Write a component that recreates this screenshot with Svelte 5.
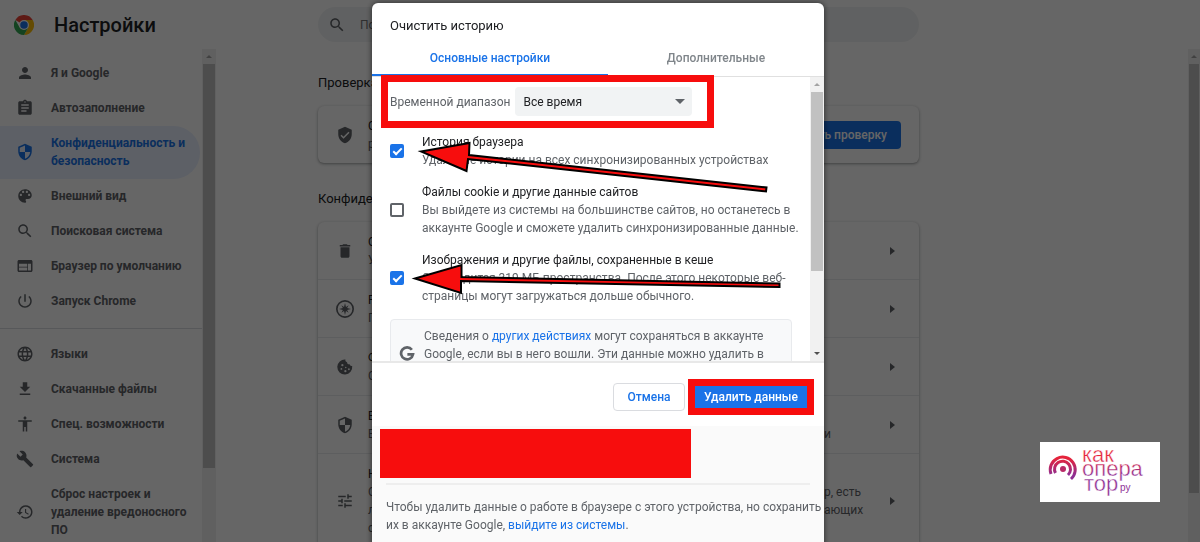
<script>
  const primaryNav = [
    { icon: 'person', label: 'Я и Google' },
    { icon: 'clipboard', label: 'Автозаполнение' },
    { icon: 'shield', label: 'Конфиденциальность и безопасность', active: true },
    { icon: 'palette', label: 'Внешний вид' },
    { icon: 'search', label: 'Поисковая система' },
    { icon: 'browser', label: 'Браузер по умолчанию' },
    { icon: 'power', label: 'Запуск Chrome' },
  ];

  const secondaryNav = [
    { icon: 'globe', label: 'Языки' },
    { icon: 'download', label: 'Скачанные файлы' },
    { icon: 'accessibility', label: 'Спец. возможности' },
    { icon: 'wrench', label: 'Система' },
    { icon: 'restore', label: 'Сброс настроек и удаление вредоносного ПО' },
  ];

  const rows = [
    { icon: 'trash', title: 'О', lines: ['У'] },
    { icon: 'compass', title: 'Р', lines: ['П'] },
    { icon: 'cookie', title: 'Ф', lines: ['С'] },
    { icon: 'shield', title: 'Б', lines: ['Б'], ends: ['и'] },
    { icon: 'tune', title: 'Н', lines: ['О', 'л', 'с'], ends: ['р, есть', 'ающих', ''] },
  ];

  let options = $state([
    { id: 'history', checked: true, title: 'История браузера', text: 'Удаление истории на всех синхронизированных устройствах' },
    { id: 'cookies', checked: false, title: 'Файлы cookie и другие данные сайтов', text: 'Вы выйдете из системы на большинстве сайтов, но останетесь в аккаунте Google и сможете удалить синхронизированные данные.' },
    { id: 'cache', checked: true, title: 'Изображения и другие файлы, сохраненные в кеше', text: 'Освободится 319 МБ пространства. После этого некоторые веб-страницы могут загружаться дольше обычного.' },
  ]);

  const icons = {
    person: 'M12 12c2.21 0 4-1.79 4-4s-1.79-4-4-4-4 1.79-4 4 1.79 4 4 4zm0 2c-2.67 0-8 1.34-8 4v2h16v-2c0-2.66-5.33-4-8-4z',
    clipboard: 'M19 3h-4.18C14.4 1.84 13.3 1 12 1s-2.4.84-2.82 2H5c-1.1 0-2 .9-2 2v14c0 1.1.9 2 2 2h14c1.1 0 2-.9 2-2V5c0-1.1-.9-2-2-2zm-7 0c.55 0 1 .45 1 1s-.45 1-1 1-1-.45-1-1 .45-1 1-1zm2 14H7v-2h7v2zm3-4H7v-2h10v2zm0-4H7V7h10v2z',
    shield: 'M12 1L3 5v6c0 5.55 3.84 10.74 9 12 5.16-1.26 9-6.45 9-12V5l-9-4zm0 10.99h7c-.53 4.12-3.28 7.79-7 8.94V12H5V6.3l7-3.11v8.8z',
    palette: 'M12 3c-4.97 0-9 4.03-9 9s4.03 9 9 9c.83 0 1.5-.67 1.5-1.5 0-.39-.15-.74-.39-1.01-.23-.26-.38-.61-.38-.99 0-.83.67-1.5 1.5-1.5H16c2.76 0 5-2.24 5-5 0-4.42-4.03-8-9-8zm-5.5 9c-.83 0-1.5-.67-1.5-1.5S5.67 9 6.5 9 8 9.67 8 10.5 7.33 12 6.5 12zm3-4C8.67 8 8 7.33 8 6.5S8.67 5 9.5 5s1.5.67 1.5 1.5S10.33 8 9.5 8zm5 0c-.83 0-1.5-.67-1.5-1.5S13.67 5 14.5 5s1.5.67 1.5 1.5S15.33 8 14.5 8zm3 4c-.83 0-1.5-.67-1.5-1.5S16.67 9 17.5 9s1.5.67 1.5 1.5-.67 1.5-1.5 1.5z',
    search: 'M15.5 14h-.79l-.28-.27C15.41 12.59 16 11.11 16 9.5 16 5.91 13.09 3 9.5 3S3 5.91 3 9.5 5.91 16 9.5 16c1.61 0 3.09-.59 4.23-1.57l.27.28v.79l5 4.99L20.49 19l-4.99-5zm-6 0C7.01 14 5 11.99 5 9.5S7.01 5 9.5 5 14 7.01 14 9.5 11.99 14 9.5 14z',
    browser: 'M20 4H4c-1.1 0-1.99.9-1.99 2L2 18c0 1.1.9 2 2 2h16c1.1 0 2-.9 2-2V6c0-1.1-.9-2-2-2zm-5 14H4v-4h11v4zm0-5H4V9h11v4zm5 5h-4V9h4v9z',
    power: 'M13 3h-2v10h2V3zm4.83 2.17l-1.42 1.42C17.99 7.86 19 9.81 19 12c0 3.87-3.13 7-7 7s-7-3.13-7-7c0-2.19 1.01-4.14 2.58-5.42L6.17 5.17C4.23 6.82 3 9.26 3 12c0 4.97 4.03 9 9 9s9-4.03 9-9c0-2.74-1.23-5.18-3.17-6.83z',
    globe: 'M12 2C6.48 2 2 6.48 2 12s4.48 10 10 10 10-4.48 10-10S17.52 2 12 2zm6.93 6h-2.95c-.32-1.25-.78-2.45-1.38-3.56 1.84.63 3.37 1.91 4.33 3.56zM12 4.04c.83 1.2 1.48 2.53 1.91 3.96h-3.82c.43-1.43 1.08-2.76 1.91-3.96zM4.26 14C4.1 13.36 4 12.69 4 12s.1-1.36.26-2h3.38c-.08.66-.14 1.32-.14 2s.06 1.34.14 2H4.26zm.82 2h2.95c.32 1.25.78 2.45 1.38 3.56-1.84-.63-3.37-1.9-4.33-3.56zm2.95-8H5.08c.96-1.66 2.49-2.93 4.33-3.56C8.81 5.55 8.35 6.75 8.03 8zM12 19.96c-.83-1.2-1.48-2.53-1.91-3.96h3.82c-.43 1.43-1.08 2.76-1.91 3.96zM14.34 14H9.66c-.09-.66-.16-1.32-.16-2s.07-1.35.16-2h4.68c.09.65.16 1.32.16 2s-.07 1.34-.16 2zm.25 5.56c.6-1.11 1.06-2.31 1.38-3.56h2.95c-.96 1.65-2.49 2.93-4.33 3.56zM16.36 14c.08-.66.14-1.32.14-2s-.06-1.34-.14-2h3.38c.16.64.26 1.31.26 2s-.1 1.36-.26 2h-3.38z',
    download: 'M19 9h-4V3H9v6H5l7 7 7-7zM5 18v2h14v-2H5z',
    accessibility: 'M12 2c1.1 0 2 .9 2 2s-.9 2-2 2-2-.9-2-2 .9-2 2-2zm9 7h-6v13h-2v-6h-2v6H9V9H3V7h18v2z',
    wrench: 'M22.7 19l-9.1-9.1c.9-2.3.4-5-1.5-6.9-2-2-5-2.4-7.4-1.3L9 6 6 9 1.6 4.7C.4 7.1.9 10.1 2.9 12.1c1.9 1.9 4.6 2.4 6.9 1.5l9.1 9.1c.4.4 1 .4 1.4 0l2.3-2.3c.5-.4.5-1.1.1-1.4z',
    restore: 'M13 3c-4.97 0-9 4.03-9 9H1l3.89 3.89.07.14L9 12H6c0-3.87 3.13-7 7-7s7 3.13 7 7-3.13 7-7 7c-1.93 0-3.68-.79-4.94-2.06l-1.42 1.42C8.27 19.99 10.51 21 13 21c4.97 0 9-4.03 9-9s-4.03-9-9-9zm-1 5v5l4.28 2.54.72-1.21-3.5-2.08V8H12z',
    verified: 'M12 1L3 5v6c0 5.55 3.84 10.74 9 12 5.16-1.26 9-6.45 9-12V5l-9-4zm-2 16l-4-4 1.41-1.41L10 14.17l6.59-6.59L18 9l-8 8z',
    trash: 'M6 19c0 1.1.9 2 2 2h8c1.1 0 2-.9 2-2V7H6v12zM19 4h-3.5l-1-1h-5l-1 1H5v2h14V4z',
    compass: 'M12 0a12 12 0 1 0 0 24 12 12 0 0 0 0-24zm0 2.2a9.8 9.8 0 1 1 0 19.6 9.8 9.8 0 0 1 0-19.6zM12 4l1.300 5.200 3.600-2.100-2.100 3.600L20 12l-5.200 1.300 2.100 3.600-3.600-2.100L12 20l-1.300-5.200-3.600 2.100 2.100-3.600L4 12l5.200-1.300-2.100-3.600 3.600 2.100z',
    cookie: 'M21.6 10.6c-1.7.5-3.2-.5-3.3-2.200-2 .5-3.800-1-3.500-2.900-1.700-.2-2.700-1.800-2.200-3.500A10 10 0 1 0 21.600 10.600zM7 9.500a1.500 1.500 0 1 1 3 0 1.500 1.500 0 0 1-3 0zm-1 5a1.200 1.200 0 1 1 2.400 0 1.200 1.200 0 0 1-2.400 0zm5 3a1.500 1.500 0 1 1 3 0 1.500 1.500 0 0 1-3 0zm1-5a1 1 0 1 1 2 0 1 1 0 0 1-2 0zm4 2.500a1.200 1.200 0 1 1 2.400 0 1.200 1.200 0 0 1-2.400 0z',
    tune: 'M3 17v2h6v-2H3zM3 5v2h10V5H3zm10 16v-2h8v-2h-8v-2h-2v6h2zM7 9v2H3v2h4v2h2V9H7zm14 4v-2H11v2h10zm-6-4h2V7h4V5h-4V3h-2v6z',
  };
</script>

{#snippet icon(name)}
  <svg class="icon" viewBox="0 0 24 24" width="18" height="18" fill="currentColor" aria-hidden="true">
    <path d={icons[name]} />
  </svg>
{/snippet}

{#snippet navLink(item)}
  <a class="nav-link" class:active={item.active} href="#settings">
    {@render icon(item.icon)}
    <span>{item.label}</span>
  </a>
{/snippet}

{#snippet scrollbar(kind)}
  <div class="scrollbar {kind}" aria-hidden="true">
    <i class="arrow up"></i>
    <i class="thumb"></i>
    {#if kind === 'inner'}
      <i class="arrow down"></i>
    {/if}
  </div>
{/snippet}

<div class="page">
  <header class="toolbar">
    <div class="brand">
      <svg viewBox="0 0 48 48" width="20" height="20" aria-hidden="true">
        <path fill="#ea4335" d="M24 24 3.200 12A24 24 0 0 1 44.800 12z" />
        <path fill="#fbbc05" d="M24 12h20.800A24 24 0 0 1 24 48l10.400-18z" />
        <path fill="#34a853" d="M3.200 12A24 24 0 0 0 24 48l10.400-18H13.600z" />
        <circle cx="24" cy="24" r="12" fill="#fff" />
        <circle cx="24" cy="24" r="9" fill="#1a73e8" />
      </svg>
      <h1>Настройки</h1>
    </div>
    <label class="search">
      {@render icon('search')}
      <input type="search" placeholder="Поиск настроек" aria-label="Поиск настроек" />
    </label>
  </header>

  <div class="body">
    <aside class="sidebar">
      <nav>
        {#each primaryNav as item}
          {@render navLink(item)}
        {/each}
        <hr />
        {#each secondaryNav as item}
          {@render navLink(item)}
        {/each}
      </nav>
      {@render scrollbar('side')}
    </aside>

    <main>
      <h2>Проверка</h2>
      <section class="card check">
        {@render icon('verified')}
        <div class="row-text"><p class="first">С</p><p>р</p></div>
        <button class="primary">Выполнить проверку</button>
      </section>

      <h2>Конфиденциальность</h2>
      <section class="card">
        {#each rows as row}
          <a class="row" href="#row">
            {@render icon(row.icon)}
            <div class="row-text">
              <p class="first">{row.title}</p>
              {#each row.lines as line, i}
                <p><span>{line}</span><span class="end">{row.ends?.[i] ?? ''}</span></p>
              {/each}
            </div>
            <i class="chevron"></i>
          </a>
        {/each}
      </section>
    </main>
    {@render scrollbar('window')}
  </div>
</div>

<div class="backdrop">
  <div class="dialog" role="dialog" aria-labelledby="dialog-title">
    <h2 class="dialog-title" id="dialog-title">Очистить историю</h2>
    <div class="tabs" role="tablist">
      <button role="tab" class="tab selected" aria-selected="true">Основные настройки</button>
      <button role="tab" class="tab" aria-selected="false">Дополнительные</button>
    </div>

    <div class="scroll-area">
      <div class="options">
        <div class="range">
          <label for="range">Временной диапазон</label>
          <div class="select">
            <select id="range"><option>Все время</option></select>
            <i></i>
          </div>
        </div>
        {#each options as option}
          <label class="option" for={option.id}>
            <input type="checkbox" id={option.id} bind:checked={option.checked} />
            <span>
              <strong>{option.title}</strong>
              <small>{option.text}</small>
            </span>
          </label>
        {/each}
        <div class="note">
          <svg viewBox="0 0 24 24" width="18" height="18" fill="none" stroke="#5f6368" stroke-width="3.6" aria-hidden="true">
            <path d="M18.500 6.300A8 8 0 1 0 20 12.500H12.500" />
          </svg>
          <p>
            Сведения о <a href="#activity">других действиях</a> могут сохраняться в аккаунте
            Google, если вы в него вошли. Эти данные можно удалить в
          </p>
        </div>
      </div>
      {@render scrollbar('inner')}
    </div>

    <div class="actions">
      <button class="cancel">Отмена</button>
      <button class="confirm">Удалить данные</button>
    </div>

    <footer>
      <div class="account"></div>
      <div class="rule"></div>
      <p>
        Чтобы удалить данные о работе в браузере с этого устройства, но сохранить их в аккаунте
        Google, <a href="#signout">выйдите из системы</a>.
      </p>
    </footer>

    <div class="frame"></div>
    <svg class="pointers" viewBox="0 0 452 542" width="452" height="542" aria-hidden="true">
      <g fill="#f70d0d" stroke="#000" stroke-width="2">
        <path d="M49 148.500 97.500 140 97 152 394.500 184.500 394 188.500 96 156 94.500 168z" />
        <path d="M43 275.500 89.500 262V274L407.500 280.500V284L89 278V290z" />
      </g>
    </svg>
  </div>
</div>

<div class="watermark">
  <svg viewBox="0 0 120 60" width="120" height="60" role="img" aria-label="как оператор.ру">
    <defs>
      <linearGradient id="ink" x1="0" y1="8" x2="0" y2="50" gradientUnits="userSpaceOnUse">
        <stop offset="0.2" stop-color="#e5233b" />
        <stop offset="0.6" stop-color="#8e2f93" />
      </linearGradient>
    </defs>
    <g fill="none" stroke="url(#ink)" stroke-width="3">
      <path d="M11 32A12.500 12.500 0 1 1 31 37" />
      <path d="M15.500 31A8 8 0 1 1 28 33" />
    </g>
    <circle cx="23" cy="27" r="3" fill="#b82a67" />
    <g fill="url(#ink)" stroke="#fff" stroke-width="0.4">
      <text x="42" y="20" font-size="22">как</text>
      <text x="42" y="34" font-size="22">опера</text>
      <text x="44" y="49" font-size="22">тор</text>
      <text x="80" y="49" font-size="10" stroke="none">ру</text>
    </g>
  </svg>
</div>

<style>
  :global(body) {
    background: #fff;
    color: #202124;
    font: 12px/18px Roboto, 'Liberation Sans', sans-serif;
    overflow: hidden;
  }

  h1, h2, p {
    margin: 0;
    font-weight: 400;
  }

  a {
    color: #1a73e8;
    text-decoration: none;
  }

  button, input, select {
    font: inherit;
  }

  .icon {
    flex: none;
  }

  .page {
    height: 100vh;
    display: flex;
    flex-direction: column;
    overflow: hidden;
  }

  /* Toolbar */
  .toolbar {
    flex: none;
    height: 49px;
    display: flex;
    align-items: center;
  }

  .brand {
    width: 304px;
    padding-left: 14px;
    display: flex;
    align-items: center;
    gap: 20px;
  }

  h1 {
    font-size: 20px;
    line-height: 24px;
    font-weight: 500;
  }

  .search {
    width: 601px;
    height: 35px;
    padding: 0 10px;
    box-sizing: border-box;
    display: flex;
    align-items: center;
    gap: 12px;
    border-radius: 18px;
    background: #f1f3f4;
    color: #5f6368;
  }

  .search input {
    flex: 1;
    border: 0;
    background: none;
  }

  /* Sidebar */
  .body {
    flex: 1;
    min-height: 0;
    display: flex;
  }

  .sidebar {
    flex: none;
    width: 216px;
    display: flex;
    overflow: hidden;
  }

  nav {
    flex: 1;
    padding-top: 7px;
  }

  .nav-link {
    display: flex;
    align-items: center;
    gap: 17px;
    margin-right: 2px;
    padding: 8px 4px 9px 16px;
    color: #5f6368;
    font-weight: 700;
  }

  .nav-link.active {
    color: #1a73e8;
    background: #e8f0fe;
    border-radius: 0 27px 27px 0;
  }

  hr {
    height: 1px;
    margin: 9px 0 8px;
    border: 0;
    background: #dadce0;
  }

  /* Main column */
  main {
    flex: 1;
    padding-left: 102px;
    overflow: hidden;
  }

  main h2 {
    margin: 27px 0 14px;
    font-size: 13px;
  }

  main h2:first-child {
    margin-top: 25px;
  }

  .card {
    width: 601px;
    border-radius: 6px;
    box-shadow: 0 1px 2px rgba(60, 64, 67, 0.3), 0 1px 3px 1px rgba(60, 64, 67, 0.15);
    color: #5f6368;
  }

  .check, .row {
    display: flex;
    align-items: center;
    gap: 14px;
    padding: 11px 18px 10px;
    color: #5f6368;
  }

  .check {
    box-sizing: border-box;
  }

  .row + .row {
    border-top: 1px solid #e8eaed;
  }

  .row-text {
    flex: 1;
  }

  .row-text p {
    display: flex;
    justify-content: space-between;
  }

  .row-text .first {
    color: #202124;
  }

  .end {
    width: 52px;
  }

  .primary {
    height: 28px;
    padding: 0 14px;
    border: 0;
    border-radius: 4px;
    background: #1a73e8;
    color: #fff;
    font-weight: 500;
  }

  .chevron {
    border: 4px solid transparent;
    border-left: 5px solid #5f6368;
    border-right: 0;
    margin-right: 6px;
  }

  /* Scrollbars */
  .scrollbar {
    flex: none;
    width: 14px;
    display: flex;
    flex-direction: column;
    align-items: center;
    background: #f1f1f1;
  }

  .scrollbar.window {
    width: 12px;
  }

  .arrow {
    flex: none;
    height: 15px;
    display: flex;
    align-items: center;
  }

  .arrow::after {
    content: '';
    border: 3px solid transparent;
  }

  .arrow.up::after {
    border-top: 0;
    border-bottom-color: #a3a3a3;
  }

  .arrow.down::after {
    border-bottom: 0;
    border-top-color: #505050;
  }

  .arrow.down {
    margin-top: auto;
  }

  .thumb {
    width: 12px;
    height: 82%;
    background: #c1c1c1;
  }

  .inner .thumb {
    height: 63%;
  }

  .window .thumb {
    width: 10px;
    height: 87%;
  }

  /* Dialog */
  .backdrop {
    position: fixed;
    inset: 0;
    display: flex;
    justify-content: center;
    padding: 3px 4px 0 0;
    background: rgba(0, 0, 0, 0.6);
    overflow: hidden;
  }

  .dialog {
    position: relative;
    width: 452px;
    height: max-content;
    background: #fff;
    border-radius: 6px 6px 0 0;
    box-shadow: 0 0 6px rgba(0, 0, 0, 0.6);
  }

  .dialog-title {
    padding: 13px 18px 6px;
    font-size: 13px;
    line-height: 20px;
  }

  .tabs {
    display: flex;
    border-bottom: 1px solid #e0e0e0;
  }

  .tab {
    flex: 1;
    height: 34px;
    padding: 0;
    border: 0;
    border-bottom: 2px solid transparent;
    background: none;
    color: #80868b;
    font-weight: 500;
  }

  .tab.selected {
    flex: 0 0 236px;
    color: #1a73e8;
    border-color: #1a73e8;
  }

  .scroll-area {
    height: 284px;
    display: flex;
    overflow: hidden;
    border-bottom: 2px solid #e8e8e8;
  }

  .options {
    flex: 1;
    padding: 10px 0 0 18px;
    overflow: hidden;
  }

  .range {
    display: flex;
    align-items: center;
    gap: 5px;
    margin-bottom: 17px;
    color: #5f6368;
  }

  .select {
    display: flex;
    align-items: center;
    width: 177px;
    height: 29px;
    border-radius: 4px;
    background: #f1f3f4;
  }

  .select select {
    flex: 1;
    padding: 0 8px;
    border: 0;
    background: none;
    color: #202124;
    appearance: none;
  }

  .select i {
    margin-right: 7px;
    border: 5px solid transparent;
    border-top-color: #5f6368;
    border-bottom: 0;
  }

  .option {
    display: flex;
    align-items: center;
    gap: 18px;
    margin-bottom: 14px;
  }

  .option input {
    flex: none;
    display: flex;
    justify-content: center;
    width: 14px;
    height: 14px;
    margin: 0;
    box-sizing: border-box;
    border: 2px solid #5f6368;
    border-radius: 2px;
    appearance: none;
  }

  .option input:checked {
    border-color: #1a73e8;
    background: #1a73e8;
  }

  .option input:checked::after {
    content: '';
    width: 3px;
    height: 7px;
    border: solid #fff;
    border-width: 0 2px 2px 0;
    transform: rotate(45deg);
  }

  .option strong, .option small {
    display: block;
    font-size: 12px;
    font-weight: 400;
  }

  .option small {
    color: #5f6368;
  }

  .note {
    display: flex;
    align-items: center;
    gap: 8px;
    margin-right: 18px;
    padding: 7px 7px 25px;
    border: 1px solid #e8eaed;
    border-radius: 4px;
    background: #f8f9fa;
    color: #5f6368;
  }

  .note svg {
    flex: none;
    align-self: flex-end;
  }

  .actions {
    display: flex;
    justify-content: flex-end;
    align-items: center;
    gap: 3px;
    padding: 16px 10px 11px;
  }

  .actions button {
    font-weight: 500;
  }

  .cancel {
    width: 72px;
    height: 28px;
    border: 1px solid #dadce0;
    border-radius: 4px;
    background: #fff;
    color: #1a73e8;
  }

  .confirm {
    width: 126px;
    height: 36px;
    padding: 0;
    border: 7px solid #f70d0d;
    background: #1a73e8;
    color: #fff;
  }

  footer {
    padding: 3px 0 20px 14px;
    background: #fafafa;
    color: #5f6368;
  }

  .account {
    height: 49px;
    width: 311px;
    margin-left: -6px;
    background: #f70d0d;
  }

  .rule {
    height: 2px;
    margin: 5px 14px 13px 0;
    background: #eee;
  }

  /* Marks drawn over the dialog */
  .frame {
    position: absolute;
    top: 72px;
    left: 9px;
    width: 333px;
    height: 53px;
    box-sizing: border-box;
    border: 7px solid #f70d0d;
  }

  .pointers {
    position: absolute;
    top: 0;
    left: 0;
    pointer-events: none;
  }

  .watermark {
    position: fixed;
    right: 40px;
    bottom: 40px;
    height: 60px;
    background: #fff;
    font-family: 'Liberation Sans', sans-serif;
  }
</style>
